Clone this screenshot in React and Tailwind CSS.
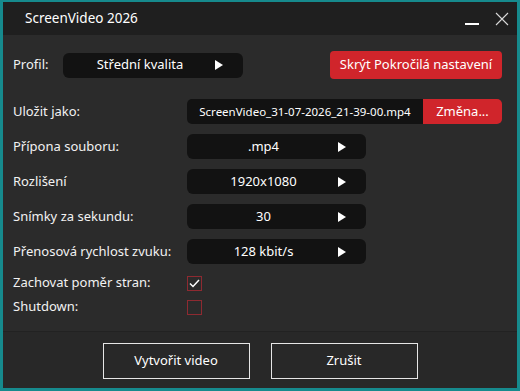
import React, { useState } from "react";

const font = { fontFamily: '"Noto Sans", "Open Sans", sans-serif' };

function Arrow() {
  return (
    <svg width="8" height="10" viewBox="0 0 8 10" className="shrink-0">
      <path d="M0 0 L8 5 L0 10 Z" fill="#ffffff" />
    </svg>
  );
}

function Dropdown({ value, width }) {
  return (
    <div
      className={`flex h-full items-center rounded-[6px] bg-[#121212] pr-[20px] text-white ${width}`}
    >
      <span className="flex-1 pl-[2px] text-center">{value}</span>
      <Arrow />
    </div>
  );
}

function Checkbox({ checked, onClick }) {
  return (
    <button
      onClick={onClick}
      className="flex h-[15px] w-[15px] items-center justify-center border border-[#8e2a31] bg-[#2b2b2b]"
    >
      {checked && (
        <svg width="11" height="9" viewBox="0 0 11 9">
          <path d="M1 4.5 L4 7.5 L10 1" fill="none" stroke="#ffffff" strokeWidth="1.5" />
        </svg>
      )}
    </button>
  );
}

export default function App() {
  const [keepRatio, setKeepRatio] = useState(true);
  const [shutdown, setShutdown] = useState(false);

  const rows = [
    { label: "Přípona souboru:", value: ".mp4" },
    { label: "Rozlišení", value: "1920x1080" },
    { label: "Snímky za sekundu:", value: "30" },
    { label: "Přenosová rychlost zvuku:", value: "128 kbit/s" },
  ];

  return (
    <div
      className="flex h-[391px] w-[520px] flex-col border-x-[3px] border-t-2 border-b-[3px] border-[#168a8d] bg-[#2b2b2b] text-[13px] text-[#f2f2f2]"
      style={font}
    >
      {/* title bar */}
      <div className="flex h-[33px] shrink-0 items-center bg-[#1f1f1f] pl-[22px] pr-[8px]">
        <span className="flex-1 text-[13.5px] text-white">ScreenVideo 2026</span>
        <div className="mt-[10px] h-[2px] w-[14px] bg-white" />
        <svg width="14" height="14" viewBox="0 0 14 14" className="ml-[16px]">
          <path d="M1 1 L13 13 M13 1 L1 13" stroke="#d8d8d8" strokeWidth="1.1" />
        </svg>
      </div>

      {/* body */}
      <div className="flex flex-1 flex-col pl-[10px] pr-[15px] pt-[16px]">
        <div className="flex h-[28px] items-center">
          <span className="w-[50px]">Profil:</span>
          <div className="h-[25px]">
            <Dropdown value="Střední kvalita" width="w-[180px]" />
          </div>
          <button className="ml-auto h-[28px] w-[172px] rounded-[4px] bg-[#d0252b] text-white">
            Skrýt Pokročilá nastavení
          </button>
        </div>

        <div className="mt-[20px] flex flex-col gap-[10px]">
          <div className="flex h-[25px] items-center">
            <span className="w-[174px]">Uložit jako:</span>
            <div className="flex h-full flex-1 overflow-hidden rounded-[5px]">
              <span className="flex flex-1 items-center justify-center bg-[#121212] text-[11.5px] text-white">
                ScreenVideo_31-07-2026_21-39-00.mp4
              </span>
              <span className="flex w-[79px] items-center justify-center bg-[#d0252b] text-white">
                Změna...
              </span>
            </div>
          </div>
          {rows.map((r) => (
            <div key={r.label} className="flex h-[25px] items-center">
              <span className="w-[174px]">{r.label}</span>
              <Dropdown value={r.value} width="w-[179px]" />
            </div>
          ))}
        </div>

        <div className="mt-[7px] flex h-[24px] items-center">
          <span className="w-[174px]">Zachovat poměr stran:</span>
          <Checkbox checked={keepRatio} onClick={() => setKeepRatio(!keepRatio)} />
        </div>
        <div className="flex h-[24px] items-center">
          <span className="w-[174px]">Shutdown:</span>
          <Checkbox checked={shutdown} onClick={() => setShutdown(!shutdown)} />
        </div>
      </div>

      {/* footer */}
      <div className="flex h-[57px] shrink-0 justify-center gap-[21px] border-t border-[#222222] bg-[#282828] pt-[11px]">
        <button className="h-[36px] w-[147px] border-[1.5px] border-[#e6e6e6] text-[13px] text-white">
          Vytvořit video
        </button>
        <button className="h-[36px] w-[147px] border-[1.5px] border-[#e6e6e6] text-[13px] text-white">
          Zrušit
        </button>
      </div>
    </div>
  );
}
